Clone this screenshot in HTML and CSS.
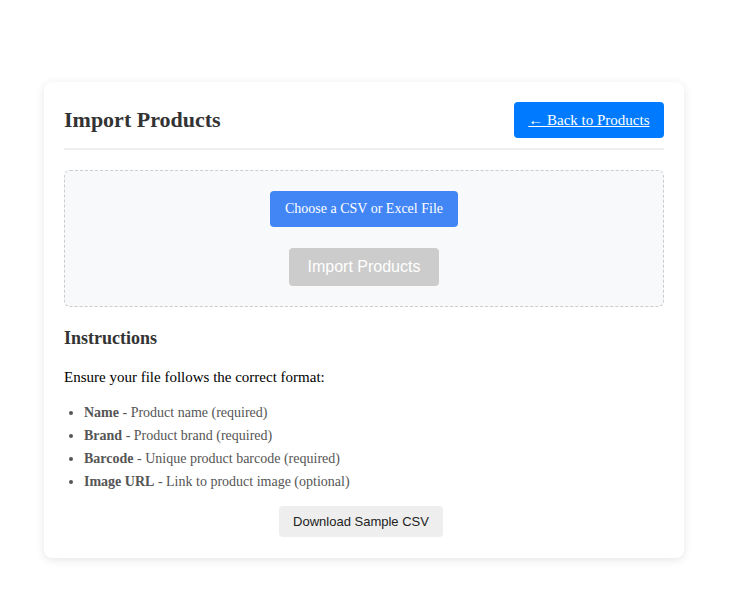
FILE: index.html
```html
<!DOCTYPE html>
<html>
<head>
<meta charset="utf-8">
<link rel="stylesheet" href="styles.css">
</head>
<body>
<div class="page">
  <div class="card">
    <div class="header">
      <h2 class="title">Import Products</h2>
      <a class="back" href="#">← Back to Products</a>
    </div>
    <div class="dropzone">
      <button class="choose">Choose a CSV or Excel File</button>
      <button class="import">Import Products</button>
    </div>
    <h3 class="inst-title">Instructions</h3>
    <p class="inst-text">Ensure your file follows the correct format:</p>
    <ul class="fields">
      <li><strong>Name</strong> - Product name (required)</li>
      <li><strong>Brand</strong> - Product brand (required)</li>
      <li><strong>Barcode</strong> - Unique product barcode (required)</li>
      <li><strong>Image URL</strong> - Link to product image (optional)</li>
    </ul>
    <div class="dl-row">
      <button class="download">Download Sample CSV</button>
    </div>
  </div>
</div>
</body>
</html>
```
FILE: styles.css
```css
html, body {
  margin: 0;
  padding: 0;
  background: #ffffff;
  font-family: "Liberation Serif", "Times New Roman", serif;
}
.page {
  padding: 82px 52px 35px 44px;
}
.card {
  width: 600px;
  padding: 20px 20px 21px;
  background: #fff;
  border-radius: 8px;
  box-shadow: 0 2px 10px rgba(0,0,0,0.1);
}
.header {
  display: flex;
  justify-content: space-between;
  align-items: center;
  padding-bottom: 10px;
  border-bottom: 2px solid #eee;
}
.title {
  margin: 0;
  font-size: 22px;
  font-weight: bold;
  color: #333;
}
.back {
  display: block;
  background: #007bff;
  color: #fff;
  font-size: 15px;
  line-height: 20px;
  padding: 8px 14.5px;
  border-radius: 4px;
  text-decoration: underline;
}
.dropzone {
  margin-top: 20px;
  border: 1px dashed #ccc;
  border-radius: 6px;
  background: #f8f9fa;
  padding: 20px;
  display: flex;
  flex-direction: column;
  align-items: center;
  gap: 21px;
}
.choose {
  background: #4285f4;
  color: #fff;
  border: none;
  border-radius: 4px;
  font-family: "Liberation Serif", serif;
  font-size: 14px;
  height: 36px;
  padding: 0 15px;
}
.import {
  background: #ccc;
  color: #fff;
  border: none;
  border-radius: 4px;
  font-family: "Liberation Sans", Arial, sans-serif;
  font-size: 16px;
  height: 38px;
  padding: 0 18.5px;
}
.inst-title {
  margin: 21px 0 0;
  font-size: 18px;
  color: #333;
}
.inst-text {
  margin: 20px 0 0;
  font-size: 15px;
  color: #000;
}
.fields {
  margin: 15px 0 0;
  padding-left: 20px;
  color: #555;
  font-size: 14px;
}
.fields li {
  line-height: 23px;
}
.dl-row {
  display: flex;
  justify-content: center;
  margin-top: 13px;
  padding-right: 6px;
}
.download {
  background: #eee;
  color: #222;
  border: none;
  border-radius: 4px;
  font-family: "Liberation Sans", Arial, sans-serif;
  font-size: 13px;
  height: 31px;
  padding: 0 14px;
}
```
